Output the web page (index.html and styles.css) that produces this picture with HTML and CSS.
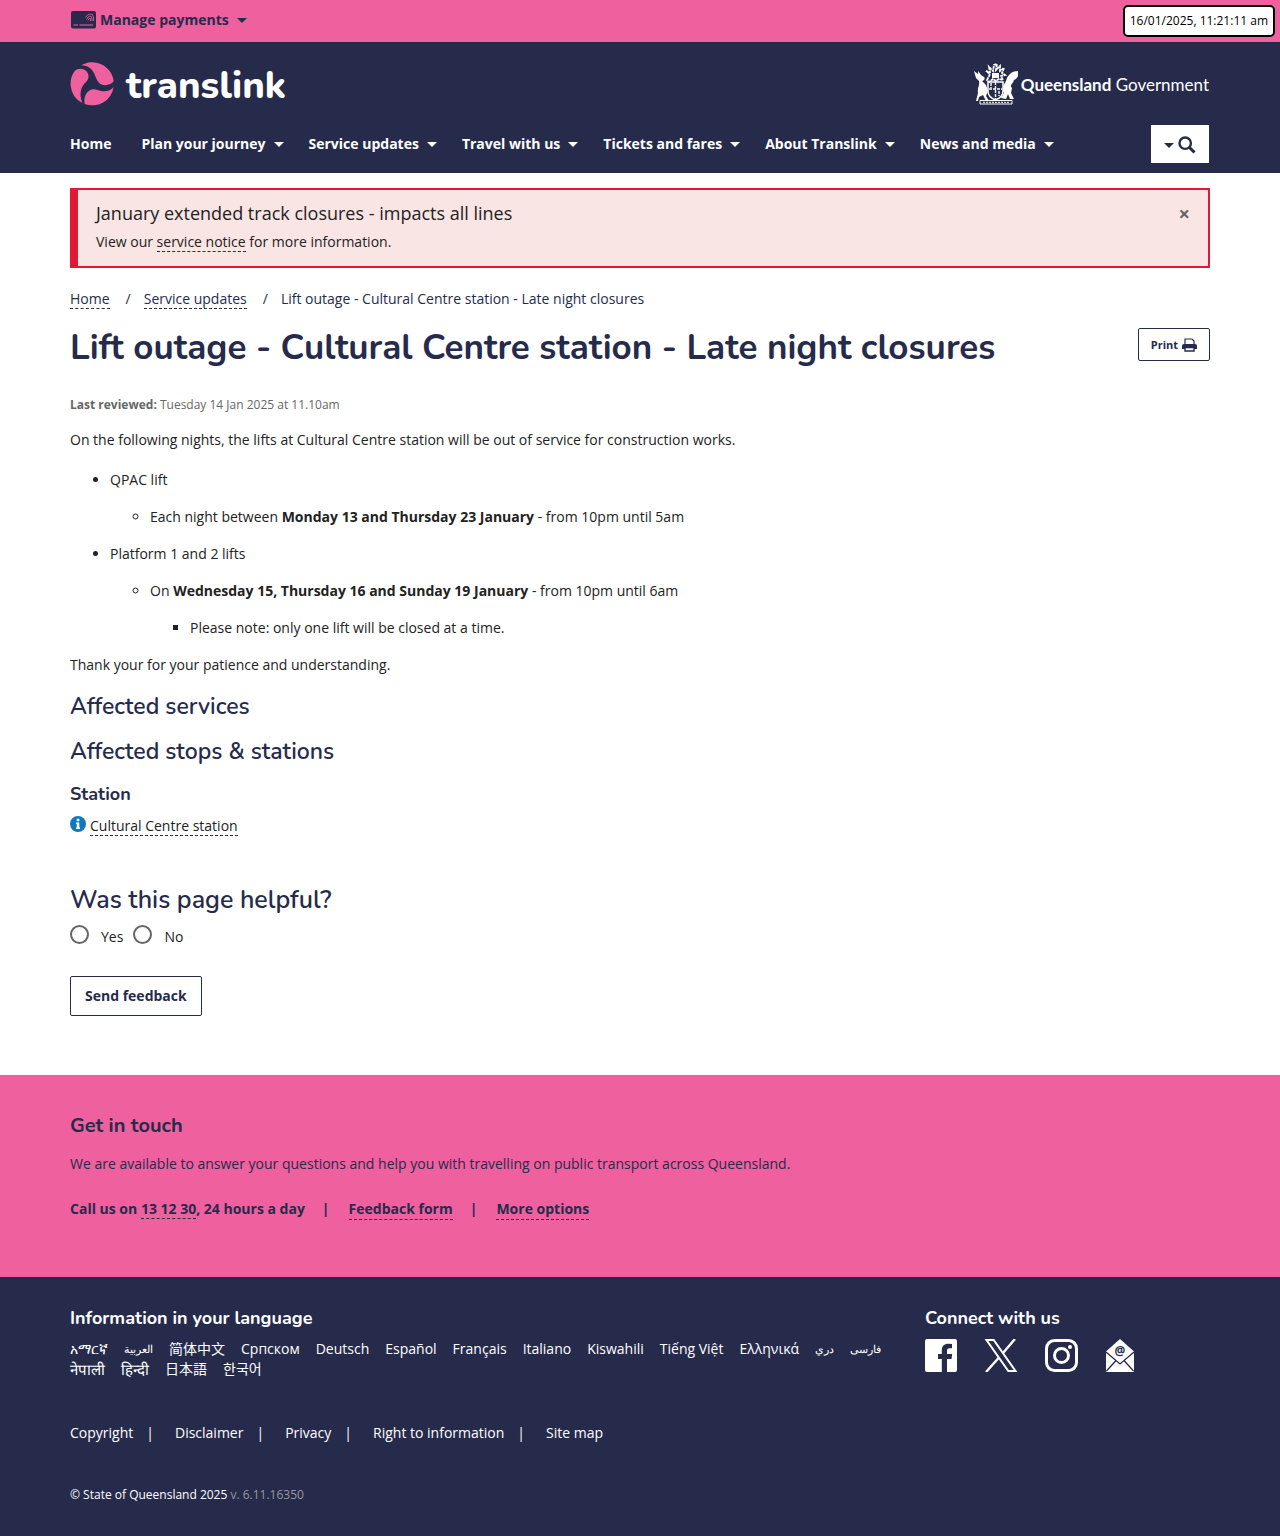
FILE: index.html
```html
<!DOCTYPE html>
<html lang="en">
<head>
<meta charset="utf-8">
<meta name="viewport" content="width=device-width, initial-scale=1">
<title>Lift outage - Cultural Centre station - Late night closures | Translink</title>
<link rel="stylesheet" href="styles.css">
</head>
<body>
<div class="topbar">
  <div class="container">
    <button type="button" class="payments">
      <svg width="26" height="18" viewBox="0 0 26 18" aria-hidden="true"><rect x="1" y="0" width="25" height="17.500" rx="2" fill="#262b4c"/><path d="M3.500 14h4.500M9.500 14H23" stroke="#ef609f" stroke-width="1"/><path d="M15.500 6.500Q17 3.500 20 3t3.500 3v4M16.500 8.500Q18 5 20 5t2 3v2M18 9.500q1-2.500 2-2.500t.5 3" fill="none" stroke="#ef609f" stroke-width=".8"/></svg>
      <span>Manage payments</span><span class="caret"></span>
    </button>
  </div>
  <time class="clock">16/01/2025, 11:21:11 am</time>
</div>
<header class="header">
  <div class="container">
    <div class="brand-row">
      <a class="brand" href="#" aria-label="Translink">
        <svg width="44" height="44" viewBox="-2 -1 132 132" aria-hidden="true" fill="#ef609f"><path d="M31 9A65 65 0 0 1 129 57C122 66 110 70 98 68C82 65 79 53 74 42C67 22 54 9 31 9Z"/><path d="M0 70A65 65 0 0 1 12 26C26 14 46 20 52 34C57 47 50 56 42 63C28 78 26 100 35 122A65 65 0 0 1 0 70Z"/><path d="M42 125C39 106 45 88 61 82C73 79 82 84 91 86C107 89 121 84 129 74A65 65 0 0 1 42 125Z"/></svg>
        <span>translink</span>
      </a>
      <a class="gov" href="#">
        <svg width="44" height="42" viewBox="0 0 44 42" aria-hidden="true" fill="#fff"><path d="M0 8l4 3V8l3 4 3 2c2 2-1 4-2 4l4 4 2 6-2 5 3 5h-3l-3-6-4 2-1 4H2l2-8c-1-5 2-8 1-12L2 15z"/><path d="M44 8c-7 0-11 5-12 10l-4 7 2 5-3 5 5 1 2-5 2 5h4l-3-6 1-5c-3-3 1-4 2-8 4-2 5-5 4-9z"/><path d="M6 37.500h32v3.500H6z" fill="none" stroke="#fff"/><path d="M9 39.300h26" stroke="#fff" stroke-dasharray="2 1"/><path d="M14 19h15v9q0 6-7.500 9Q14 34 14 28z" fill="#262b4c" stroke="#fff" stroke-width="1.500"/><path d="M15 26h13M21.500 19v17M17 20v5M25 28v5" fill="none" stroke="#fff" stroke-width="1.400" stroke-dasharray="3 1"/><path d="M13 17l3-6-4-3 4 1-1-5 4 4 1-6 3-1-1 6 4-4 0 5 4-3-2 5 3 2-4 1 2 4-4-1-3 2-3-2-4 3z" fill="none" stroke="#fff" stroke-width="1.800" stroke-dasharray="3 .6"/><path d="M18 10h7v5h-7z"/></svg>
        <span><b>Queensland</b> Government</span>
      </a>
    </div>
    <div class="nav-row">
      <nav class="nav" aria-label="Main">
        <a class="plain" href="#">Home</a>
        <a href="#">Plan your journey<span class="caret"></span></a>
        <a href="#">Service updates<span class="caret"></span></a>
        <a href="#">Travel with us<span class="caret"></span></a>
        <a href="#">Tickets and fares<span class="caret"></span></a>
        <a href="#">About Translink<span class="caret"></span></a>
        <a href="#">News and media<span class="caret"></span></a>
      </nav>
      <button type="button" class="search" aria-label="Search"><span class="caret"></span>
        <svg width="18" height="18" viewBox="0 0 18 18" aria-hidden="true" fill="none" stroke="#262b4c"><circle cx="7.200" cy="7.200" r="5.700" stroke-width="2.400"/><path d="M11.500 11.500L16.500 16.500" stroke-width="3"/></svg>
      </button>
    </div>
  </div>
</header>
<main class="container">
  <section class="alert" role="alert">
    <div><p class="alert-title">January extended track closures - impacts all lines</p>
    <p>View our <a class="link" href="#">service notice</a> for more information.</p></div>
    <button type="button" class="close" aria-label="Close">×</button>
  </section>
  <nav class="crumbs" aria-label="Breadcrumb"><a class="link" href="#">Home</a><span>/</span><a class="link" href="#">Service updates</a><span>/</span>Lift outage - Cultural Centre station - Late night closures</nav>
  <div class="title-row">
    <h1>Lift outage - Cultural Centre station - Late night closures</h1>
    <button type="button" class="print">Print
      <svg width="15" height="14" viewBox="0 0 15 14" aria-hidden="true"><path d="M3 6V1h7l2 2v3" fill="none" stroke="#262b4c" stroke-width="1.200"/><path d="M2 6h11q2 0 2 2v3H0V8q0-2 2-2z" fill="#262b4c"/><path d="M3 9.500h9V13H3z" fill="#fff" stroke="#262b4c" stroke-width="1.400"/></svg>
    </button>
  </div>
  <p class="reviewed"><b>Last reviewed:</b> Tuesday 14 Jan 2025 at 11.10am</p>
  <p>On the following nights, the lifts at Cultural Centre station will be out of service for construction works.</p>
  <ul class="notes">
    <li>QPAC lift
      <ul><li>Each night between <b>Monday 13 and Thursday 23 January</b> - from 10pm until 5am</li></ul>
    </li>
    <li>Platform 1 and 2 lifts
      <ul><li>On <b>Wednesday 15, Thursday 16 and Sunday 19 January</b> - from 10pm until 6am
        <ul><li>Please note: only one lift will be closed at a time.</li></ul></li></ul>
    </li>
  </ul>
  <p>Thank your for your patience and understanding.</p>
  <h2>Affected services</h2>
  <h2>Affected stops &amp; stations</h2>
  <h3>Station</h3>
  <p class="station"><svg width="16" height="16" viewBox="0 0 16 16" aria-hidden="true"><circle cx="8" cy="8" r="8" fill="#1178be"/><path d="M6 6.500h3.300v5H10V13H6v-1.500h.8V8H6zM6.800 2.800h2.500v2.400H6.800z" fill="#fff"/></svg><a class="link" href="#">Cultural Centre station</a></p>
  <form class="feedback">
    <h2 class="ask">Was this page helpful?</h2>
    <div class="choices">
      <input type="radio" id="yes" name="helpful"><label for="yes">Yes</label>
      <input type="radio" id="no" name="helpful"><label for="no">No</label>
    </div>
    <button type="button" class="send">Send feedback</button>
  </form>
</main>
<section class="touch">
  <div class="container">
    <h2>Get in touch</h2>
    <p>We are available to answer your questions and help you with travelling on public transport across Queensland.</p>
    <p class="contact"><span>Call us on <a class="link" href="#">13 12 30</a>, 24 hours a day</span><i>|</i><a class="link" href="#">Feedback form</a><i>|</i><a class="link" href="#">More options</a></p>
  </div>
</section>
<footer class="footer">
  <div class="container">
    <div class="footer-row">
      <section class="languages">
        <h2>Information in your language</h2>
        <div class="langs">
          <a href="#" lang="am">አማርኛ</a><a href="#" lang="ar">العربية</a><a href="#" lang="zh">简体中文</a><a href="#" lang="sr">Српском</a><a href="#" lang="de">Deutsch</a><a href="#" lang="es">Español</a><a href="#" lang="fr">Français</a><a href="#" lang="it">Italiano</a><a href="#" lang="sw">Kiswahili</a><a href="#" lang="vi">Tiếng Việt</a><a href="#" lang="el">Ελληνικά</a><a href="#" lang="prs">دري</a><a href="#" lang="fa">فارسی</a><a href="#" lang="ne">नेपाली</a><a href="#" lang="hi">हिन्दी</a><a href="#" lang="ja">日本語</a><a href="#" lang="ko">한국어</a>
        </div>
      </section>
      <section class="connect">
        <h2>Connect with us</h2>
        <div class="social">
          <a href="#" aria-label="Facebook"><svg width="32" height="33" viewBox="0 0 32 33"><path fill="#fff" d="M2 0h28q2 0 2 2v29q0 2-2 2h-8V20h4.500l.7-5H22v-3.200c0-1.500.5-2.500 2.600-2.500H27V5q-1-.2-3.700-.2c-4 0-6.500 2.300-6.500 6.500V15H13v5h3.800v13H2q-2 0-2-2V2q0-2 2-2z"/></svg></a>
          <a href="#" aria-label="X"><svg width="34" height="33" viewBox="0 0 34 33" fill="none" stroke="#fff"><path d="M2.500 1h7.200L31.500 32h-7.200z" stroke-width="2"/><path d="M31 0L19 14M15 18.500L2 33" stroke-width="2.400"/></svg></a>
          <a href="#" aria-label="Instagram"><svg width="33" height="33" viewBox="0 0 33 33" fill="none" stroke="#fff" stroke-width="3"><rect x="1.500" y="1.500" width="30" height="30" rx="8"/><circle cx="16.500" cy="16.500" r="7"/><circle cx="25" cy="8" r="2" fill="#fff" stroke="none"/></svg></a>
          <a href="#" aria-label="Email"><svg width="30" height="33" viewBox="0 0 30 33"><path fill="#fff" d="M15 0L29 12.500V32q0 1-1 1H2q-1 0-1-1V12.500z"/><path d="M1 13l14 12L29 13M1.500 32L11 21.500M28.500 32L19 21.500" fill="none" stroke="#262b4c" stroke-width="1.300"/><text x="15" y="16" text-anchor="middle" class="at">@</text></svg></a>
        </div>
      </section>
    </div>
    <p class="legal"><a href="#">Copyright</a><a href="#">Disclaimer</a><a href="#">Privacy</a><a href="#">Right to information</a><a href="#">Site map</a></p>
    <p class="copy">© State of Queensland 2025 <span>v. 6.11.16350</span></p>
  </div>
</footer>
</body>
</html>
```
FILE: styles.css
```css
* { box-sizing: border-box; }
body { margin: 0; background: #fff; color: #222; font: 14px/20px "Open Sans", "Noto Sans CJK SC", sans-serif; }
p, h1, h2, h3, ul { margin: 0; }
a { color: inherit; text-decoration: none; }
button { font: inherit; color: #262b4c; cursor: pointer; }
svg { display: block; flex: none; }
h1, h2, h3 { color: #262b4c; font-family: Nunito, Lato, sans-serif; font-weight: 700; }
h1 { font-size: 35px; line-height: 40px; }
h2 { font-size: 23px; font-weight: 600; line-height: 27px; margin-top: 18px; }
h3 { font-size: 18px; line-height: 24px; margin-top: 17px; }
.container { width: 100%; max-width: 1170px; margin: 0 auto; padding: 0 15px; }
.link { border-bottom: 1px dashed #262b4c; }
.caret { display: inline-block; border: 5px solid transparent; border-top-color: currentColor; border-bottom: 0; margin-left: 8px; }

.topbar { position: relative; background: #ef609f; height: 42px; }
.payments { display: flex; align-items: center; height: 40px; padding: 0; border: 0; background: none; font-weight: 700; }
.payments svg { margin-right: 4px; }
.clock { position: absolute; top: 5px; right: 5px; padding: 4px 5px; border: 2px solid #000; border-radius: 5px; background: #fff; color: #000; font-size: 12px; }

.header { background: #262b4c; color: #fff; padding: 20px 0 10px; }
.brand-row, .nav-row { display: flex; align-items: center; justify-content: space-between; padding-right: 1px; }
.brand { display: flex; align-items: center; gap: 12px; font: 800 38px/40px Nunito, sans-serif; }
.brand span { padding-top: 4px; }
.gov { display: flex; align-items: center; gap: 3px; font: 400 17px/24px Lato, sans-serif; }
.gov span { padding-top: 2px; }
.nav-row { margin-top: 19px; }
.nav { display: flex; gap: 25px; font-weight: 700; }
.nav a { display: flex; align-items: center; }
.nav .plain { padding-right: 5px; }
.search { display: flex; align-items: center; gap: 4px; height: 38px; padding: 2px 13px 0; border: 0; background: #fff; }
.search .caret { margin: 0; }

.alert { display: flex; justify-content: space-between; align-items: flex-start; margin-top: 15px; padding: 11px 18px 14px; border: 2px solid #e31837; border-left-width: 8px; background: #f9e5e4; }
.alert-title { font-size: 18px; line-height: 24px; margin-bottom: 7px; }
.close { border: 0; padding: 0; background: none; color: #666; font-size: 20px; font-weight: 700; line-height: 26px; }
.crumbs { margin-top: 21px; color: #262b4c; }
.crumbs span { margin: 0 13px 0 16px; }
.title-row { display: flex; justify-content: space-between; align-items: flex-start; margin-top: 19px; }
.print { display: flex; align-items: center; gap: 4px; height: 33px; padding: 0 12px; border: 1px solid #262b4c; border-radius: 2px; background: #fff; font-size: 11px; font-weight: 700; }
.reviewed { margin: 27px 0 15px; color: #666; font-size: 12px; }
.notes { margin: 20px 0 17px; }
.notes li { margin-top: 17px; }
.station { display: flex; gap: 4px; margin-top: 10px; }
.station a { line-height: 19px; }
.feedback { padding-bottom: 59px; }
.ask { margin-top: 48px; font-size: 25px; line-height: 32px; }
.choices { display: flex; margin-top: 9px; }
.choices input { appearance: none; width: 19px; height: 19px; margin: 0 12px 0 0; border: 2px solid #666; border-radius: 50%; }
.choices label { margin: 2px 10px 0 0; }
.send { display: block; height: 40px; margin-top: 29px; padding: 0 14px; border: 1px solid #262b4c; border-radius: 2px; background: #fff; font-weight: 700; }

.touch { background: #ef609f; color: #262b4c; padding: 37px 0 57px; }
.touch h2 { font-size: 20px; font-weight: 700; line-height: 28px; margin: 0 0 14px; }
.contact { display: flex; margin-top: 25px; font-weight: 700; }
.contact i { margin: 0 19px 0 17px; font-style: normal; }

.footer { background: #262b4c; color: #fff; padding: 29px 0 31px; }
.footer h2 { margin: 0; color: #fff; font-size: 18px; font-weight: 700; line-height: 24px; }
.footer-row { display: grid; grid-template-columns: 3fr 1fr; }
.langs { display: flex; flex-wrap: wrap; column-gap: 16px; margin-top: 9px; padding-right: 30px; }
.langs :lang(ar), .langs :lang(prs), .langs :lang(fa) { font-size: 11px; }
.langs :lang(ne), .langs :lang(hi) { font-size: 15px; }
.social { display: flex; gap: 27px; margin-top: 9px; }
.at { font: 700 12px "Open Sans", sans-serif; fill: #262b4c; }
.legal { display: flex; margin-top: 44px; }
.legal a + a::before { content: "|"; margin: 0 21px 0 13px; }
.copy { margin-top: 42px; font-size: 12px; }
.copy span { color: #999; }
```
